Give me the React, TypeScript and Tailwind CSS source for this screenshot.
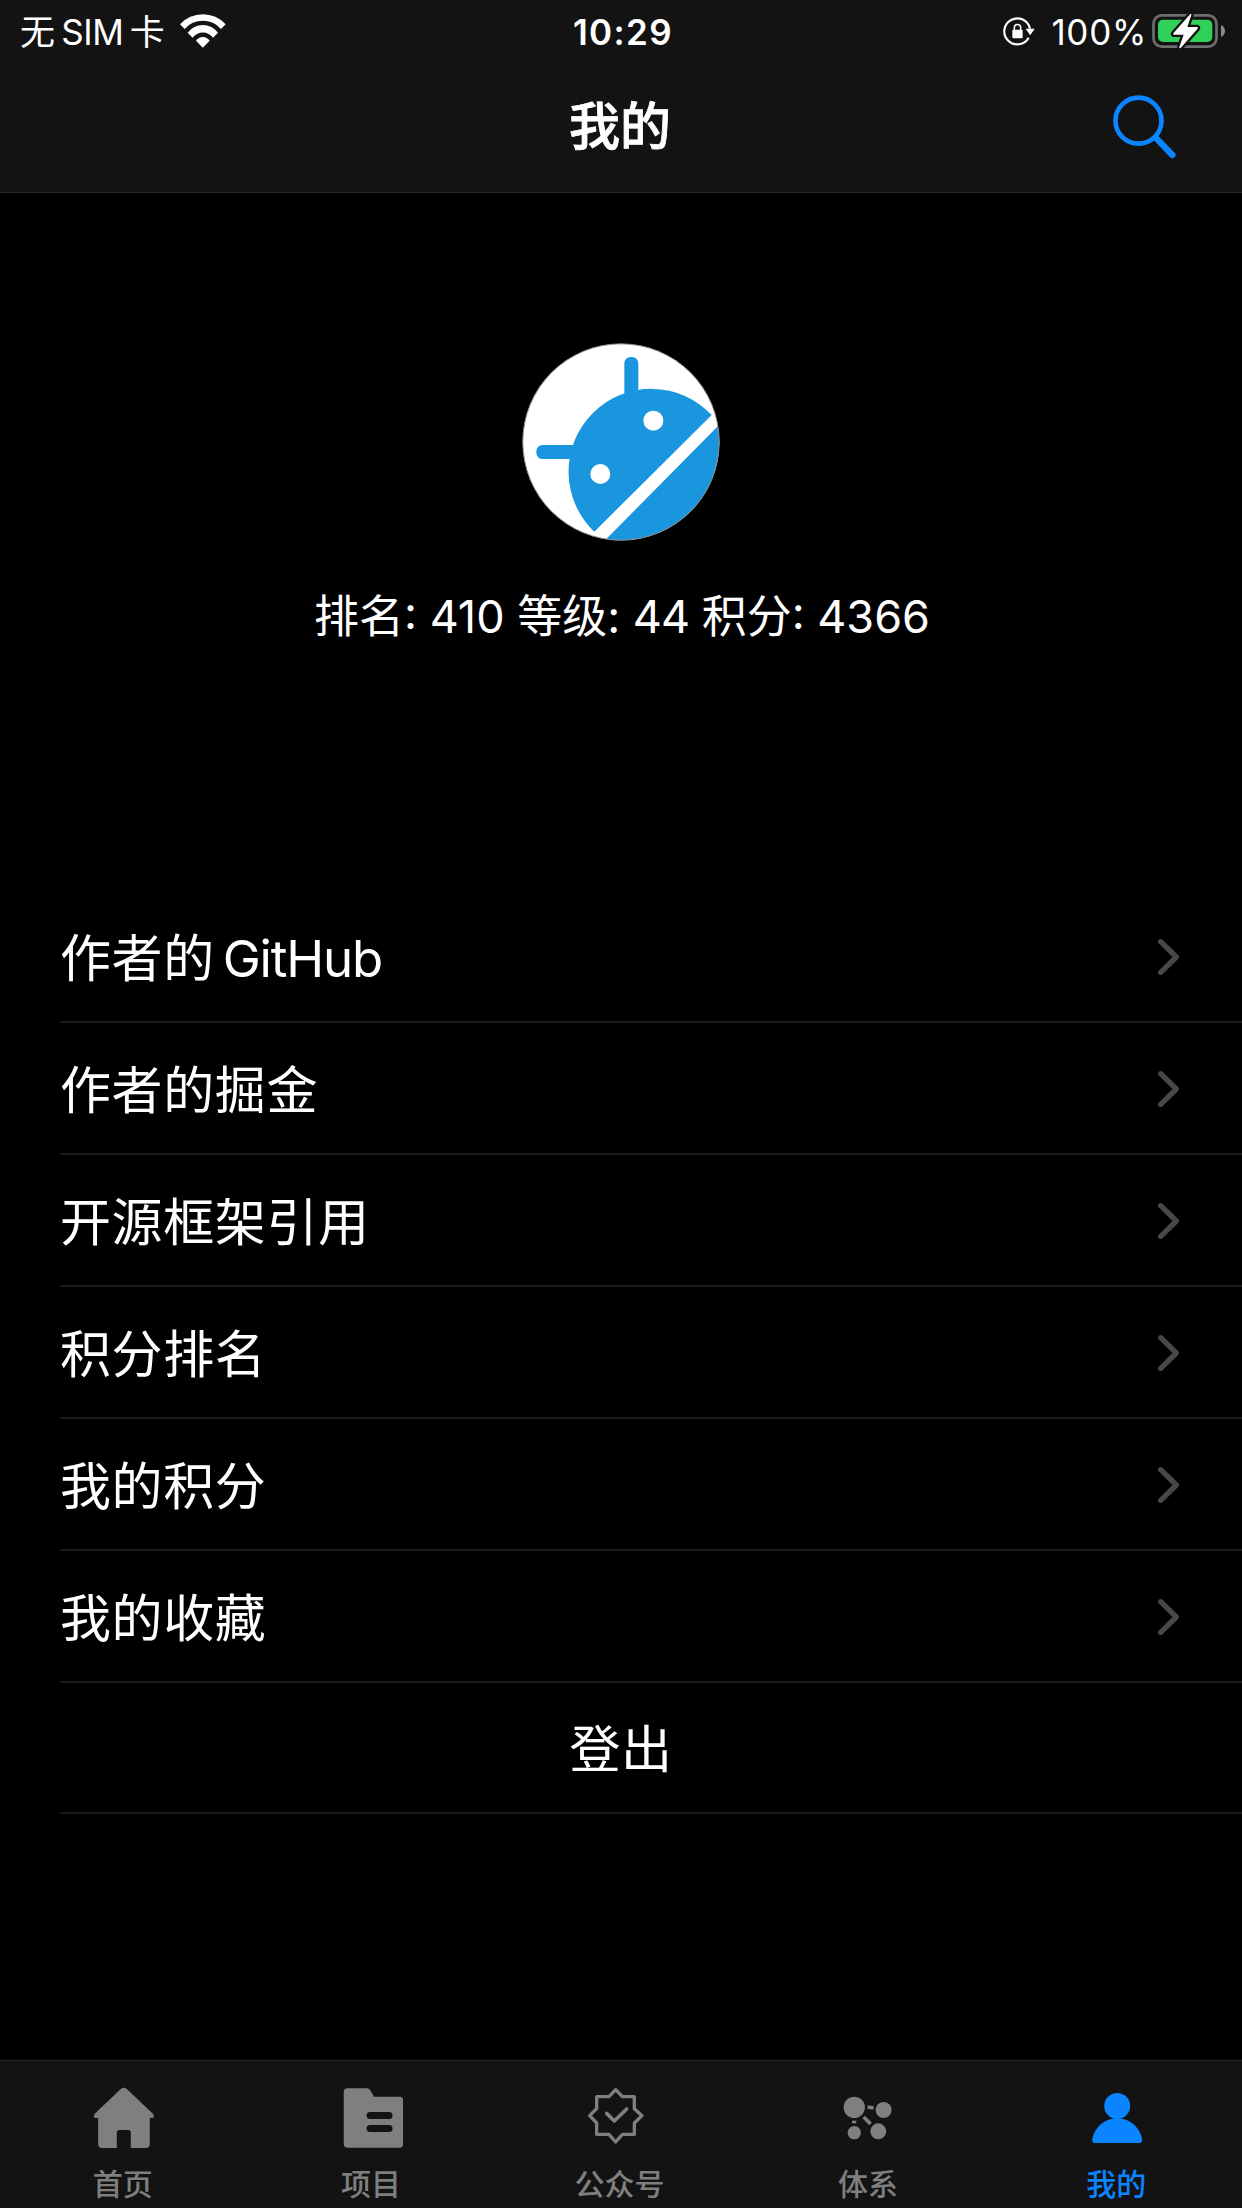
import type { ReactNode } from "react";

function WifiIcon() {
  return (
    <svg className="h-[34px] w-[46px]" viewBox="0 0 138 102" fill="#fff">
      <path d="M0 31A92 92 0 0 1 137 31L123 45A72 72 0 0 0 14 45Z" />
      <path d="M23 56A57 57 0 0 1 114 56L99 71A38 38 0 0 0 38 71Z" />
      <path d="M48 80A25 25 0 0 1 89 80L68.500 101Z" />
    </svg>
  );
}

function RotationLockIcon() {
  return (
    <svg className="h-[30px] w-8" viewBox="131 50 96 90" fill="none">
      <path d="M212 88A39 39 0 1 0 208 115" stroke="#fff" strokeWidth="6.500" />
      <path d="M199 88H226L212.500 108Z" fill="#fff" />
      <rect x="159" y="91" width="31" height="26" rx="3" fill="#fff" />
      <path d="M165 92V85A9.500 9.500 0 0 1 184 85V92" stroke="#fff" strokeWidth="4.500" />
    </svg>
  );
}

function BatteryIcon() {
  return (
    <svg className="h-9 w-[74px]" viewBox="579 36 222 108" fill="none">
      <rect x="583.500" y="43" width="189" height="94" rx="25" stroke="#6e6e6e" strokeWidth="8" />
      <rect x="597" y="56" width="163" height="67" rx="15" fill="#30d158" />
      <path d="M786 72C802 78 802 102 786 108Z" fill="#8a8a8a" />
      <path
        d="M694 39L643 97Q641 101 645 101H674L661 138Q661 143 665 141L716 83Q718 79 714 78H685L697 42Q697 37 694 39Z"
        fill="#fff"
        stroke="#131313"
        strokeWidth="14"
        strokeLinejoin="round"
        paintOrder="stroke"
      />
    </svg>
  );
}

function SearchIcon() {
  return (
    <svg className="h-16 w-[63px]" viewBox="458 284 189 192" fill="none" stroke="#0a84ff">
      <circle cx="534.500" cy="361" r="69" strokeWidth="14" />
      <path d="M586 412L636 464" strokeWidth="19" strokeLinecap="round" />
    </svg>
  );
}

function Avatar() {
  return (
    <svg className="h-[198px] w-[198px]" viewBox="36 39 594 594">
      <clipPath id="avatar-circle">
        <circle cx="333" cy="336" r="295" />
      </clipPath>
      <g clipPath="url(#avatar-circle)">
        <rect x="36" y="39" width="594" height="594" fill="#fff" />
        <g fill="#1996de">
          <path d="M253 605A248.300 248.300 0 1 1 605 255Z" />
          <path d="M279 637L640 272V640Z" />
          <rect x="343" y="81" width="42" height="130" rx="19" />
          <rect x="79" y="345" width="130" height="42" rx="19" />
        </g>
        <circle cx="430" cy="272" r="30" fill="#fff" />
        <circle cx="271" cy="432" r="30" fill="#fff" />
      </g>
      <circle cx="333" cy="336" r="294.500" fill="none" stroke="#8c8c8c" strokeWidth="3" />
    </svg>
  );
}

function Chevron() {
  return (
    <svg
      className="mt-[2px] h-10 w-6"
      viewBox="0 0 24 40"
      fill="none"
      stroke="#48484a"
      strokeWidth="5.300"
      strokeLinecap="round"
      strokeLinejoin="round"
    >
      <path d="M4.700 4.700L20.300 20L4.700 35.300" />
    </svg>
  );
}

const tabIcon = "h-[70px] w-20 fill-current";

const tabs: { label: string; icon: ReactNode; active?: boolean }[] = [
  {
    label: "首页",
    icon: (
      <svg className={tabIcon} viewBox="72.600 99 240 210">
        <path d="M183 117Q192 110 201 117L280 192Q284 197 281 203H270V282Q270 294 258 294H213V248Q213 240 205 240H179Q171 240 171 248V294H127Q115 294 115 282V204H104Q100 197 104 192Z" />
      </svg>
    ),
  },
  {
    label: "项目",
    icon: (
      <svg className={tabIcon} viewBox="817.800 99 240 210">
        <path
          fillRule="evenodd"
          d="M862 115H920Q926 115 929 120L941 140H1018Q1028 140 1028 150V282Q1028 293 1018 293H862Q850 293 850 282V127Q850 115 862 115ZM929 186A10.500 10.500 0 0 0 929 207H986A10.500 10.500 0 0 0 986 186ZM929 225A10.500 10.500 0 0 0 929 246H986A10.500 10.500 0 0 0 986 225Z"
        />
      </svg>
    ),
  },
  {
    label: "公众号",
    icon: (
      <svg className={tabIcon} viewBox="123 99 240 210">
        <g fill="none" stroke="currentColor" strokeLinejoin="round" strokeLinecap="round">
          <path
            strokeWidth="10"
            d="M227 119L247 140H283V176L306 197L283 219V253H247L227 276L207 253H170V219L149 197L170 176V140H207Z"
          />
          <path strokeWidth="11" d="M200 190L223 213L260 177" />
        </g>
      </svg>
    ),
  },
  {
    label: "体系",
    icon: (
      <svg className={tabIcon} viewBox="868.200 99 240 210">
        <circle cx="944" cy="172" r="32" />
        <circle cx="1032" cy="180" r="24" />
        <circle cx="1016" cy="244" r="24" />
        <circle cx="944" cy="248" r="20" />
        <path fill="none" stroke="currentColor" strokeWidth="11" d="M984 171L1002 174M972 201L993 222" />
        <rect x="937" y="212" width="13" height="8" />
      </svg>
    ),
  },
  {
    label: "我的",
    active: true,
    icon: (
      <svg className={tabIcon} viewBox="113.400 99 240 210">
        <circle cx="231" cy="168" r="39" />
        <path d="M156 269C163 232 193 205 231 205S299 232 306 269Q306 279 297 279H165Q156 279 156 269Z" />
      </svg>
    ),
  },
];

const links: ReactNode[] = [
  <>
    作者的 <span className="tracking-[-1.2px]">GitHub</span>
  </>,
  "作者的掘金",
  "开源框架引用",
  "积分排名",
  "我的积分",
  "我的收藏",
];

export default function App() {
  return (
    <div className="flex h-[2208px] w-[1242px] flex-col overflow-hidden bg-black font-['Inter','Noto_Sans_CJK_SC',sans-serif] text-white">
      <header className="h-[193px] shrink-0 border-b border-[#272727] bg-[#131313]">
        <div className="grid h-[60px] grid-cols-3 items-center pl-[20px] pr-[16px]">
          <div className="flex items-center gap-[15px]">
            <span className="pt-[2px] text-[35px] leading-[60px] [word-spacing:-3.500px]">
              无 <span className="tracking-[-0.5px]">SIM</span> 卡
            </span>
            <WifiIcon />
          </div>
          <div className="pt-[2px] text-center text-[35px] font-semibold leading-[60px] tracking-[1.4px]">10:29</div>
          <div className="flex items-center justify-end">
            <RotationLockIcon />
            <span className="ml-[16px] mr-[5px] pt-[2px] text-[35px] leading-[60px] tracking-[0.7px]">100%</span>
            <BatteryIcon />
          </div>
        </div>
        <div className="grid h-[134px] grid-cols-3 items-center pr-[66px]">
          <span />
          <h1 className="pl-[64px] text-center text-[51px] font-medium leading-[134px] [-webkit-text-stroke:0.800px_#fff]">
            我的
          </h1>
          <button className="justify-self-end" aria-label="搜索">
            <SearchIcon />
          </button>
        </div>
      </header>

      <section className="flex h-[698px] shrink-0 flex-col items-center pt-[150px]">
        <Avatar />
        <p className="mt-[41px] whitespace-nowrap pl-[2px] text-[45px] leading-[70px]">
          排名: 410 等级: <span className="tracking-[-1px]">44</span> 积分: 4366
        </p>
      </section>

      <main className="flex-1 pl-[60px]">
        {links.map((label, i) => (
          <div key={i} className="flex h-[132px] items-center justify-between border-b-2 border-[#1a1a1a] pr-[62px]">
            <span className="pt-[5px] text-[51px] leading-[120px] tracking-[0.6px] [word-spacing:-7px]">{label}</span>
            <Chevron />
          </div>
        ))}
        <div className="flex h-[131px] items-center justify-center border-b-2 border-[#1a1a1a] pr-[60px] pt-[5px] text-[51px] tracking-[0.6px]">
          登出
        </div>
      </main>

      <nav className="grid h-[148px] shrink-0 grid-cols-5 border-t border-[#272727] bg-[#131313]">
        {tabs.map((tab) => (
          <div
            key={tab.label}
            className={
              tab.active
                ? "flex flex-col items-center pt-[22px] text-[#0a84ff]"
                : "flex flex-col items-center pt-[22px] text-[#7f7f7f]"
            }
          >
            {tab.icon}
            <span className="pr-[3px] text-[30px] font-medium leading-[63px]">{tab.label}</span>
          </div>
        ))}
      </nav>
    </div>
  );
}
